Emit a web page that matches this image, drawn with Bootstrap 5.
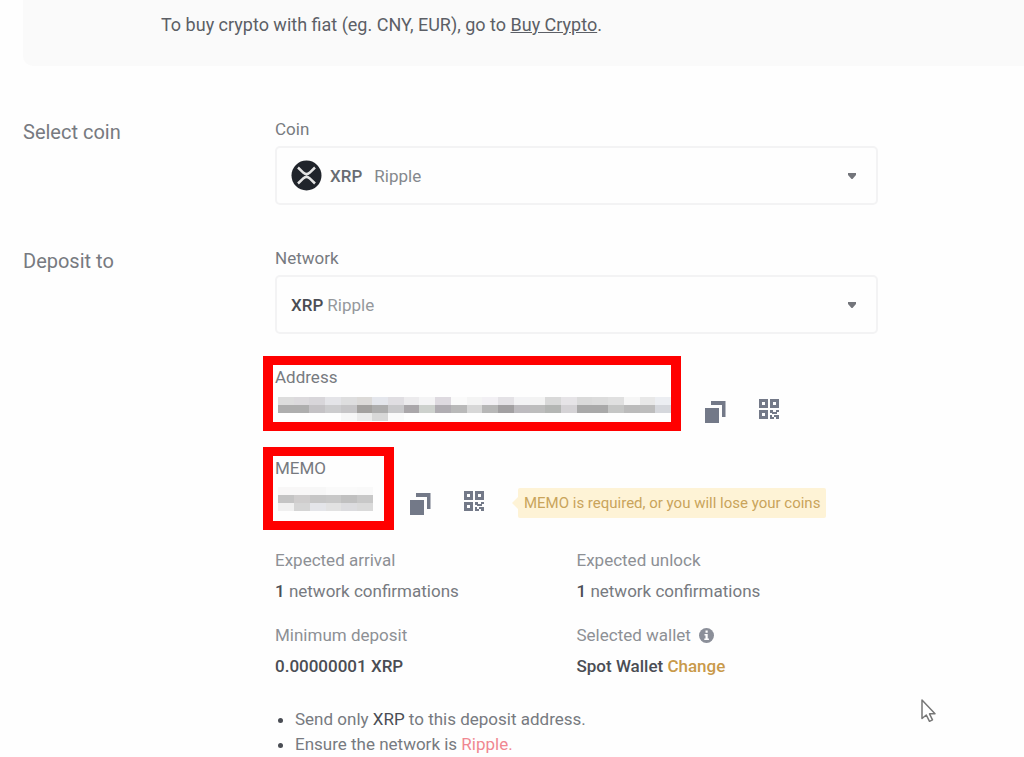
<!DOCTYPE html>
<html lang="en">
<head>
<meta charset="utf-8">
<meta name="viewport" content="width=device-width, initial-scale=1">
<title>Deposit crypto</title>
<link href="https://cdn.jsdelivr.net/npm/bootstrap@5.3.0/dist/css/bootstrap.min.css" rel="stylesheet">
<style>
  body { background: #fefefe; color: #777a80; font-family: Roboto, "Noto Sans", sans-serif; font-size: 17px; line-height: 24px; }
  .page { padding-left: 23px; }
  .notice { background: #fafafa; border-bottom-left-radius: 10px; padding: 13px 24px 29px 138px; color: #5c5f66; font-size: 18px; }
  .notice a { color: inherit; }
  .section-row { display: grid; grid-template-columns: 252px minmax(0, 603px); margin-top: 41px; }
  .notice + .section-row { margin-top: 51px; }
  .section-title { font-size: 20px; line-height: 30px; font-weight: 400; margin: 0; color: #777a80; }
  .field-label { display: block; margin-bottom: 5px; }
  .picker { border: 2px solid #f3f3f4; border-radius: 5px; height: 59px; padding-left: 14px; }
  .picker .form-select { border: 0; background-color: transparent; color: #85888d; font-size: 17px; line-height: 24px; padding: 0 40px 0 0;
    background-image: url("data:image/svg+xml,%3Csvg xmlns='http://www.w3.org/2000/svg' viewBox='0 0 8 6'%3E%3Cpath fill='%2373757b' d='M0 0h8v2L4.500 6h-1L0 2z'/%3E%3C/svg%3E");
    background-size: 8px 6px; background-position: right 20px center; }
  .symbol { font-weight: 500; color: #696c72; }
  .symbol-coin { margin: 0 12px 0 8px; }
  #network { color: #95989c; }
  .ink { color: #4a4d54; }
  .marked { border: solid #f00; border-width: 9px 10px; margin-left: -12px; padding-left: 2px; }
  .marked svg { display: block; height: 24px; margin-left: 3px; }
  .address-box { width: 418px; max-width: 100%; height: 75px; }
  .address-box svg { width: 393px; max-width: calc(100% - 3px); margin-top: 8px; }
  .memo-box { width: 131px; height: 83px; }
  .memo-box svg { width: 95px; margin-top: 7px; }
  .icon-btn { border: 0; background: none; padding: 0; line-height: 0; color: #737988; }
  .tools { gap: 33px; align-items: flex-start; }
  .tools .icon-btn:first-child { padding-top: 2px; }
  .tip { position: relative; background: #fef3d6; color: #c9a45b; font-size: 15px; line-height: 20px; padding: 5px 6px; margin-left: 33px; border-radius: 2px; }
  .tip::before { content: ""; position: absolute; left: -6px; top: 9px; border: solid transparent; border-width: 6px 6px 6px 0; border-right-color: #fef3d6; }
  .facts { row-gap: 20px; margin-top: 18px; }
  .facts dt { font-weight: 400; color: #8d9095; margin-bottom: 7px; }
  .facts dd { margin: 0; }
  .facts b { font-weight: 500; color: #4a4d54; }
  .gold { color: #c99a4a; font-weight: 500; text-decoration: none; }
  .rules { margin: 29px 0 0; padding-left: 20px; }
  .rules li { line-height: 25px; }
  .rules li::marker { color: #4a4d54; }
  .pink { color: #f08791; }
  .pointer { position: absolute; left: 920px; top: 698px; }
</style>
</head>
<body>
<svg class="d-none" aria-hidden="true">
  <symbol id="copy" viewBox="0 0 21 22"><path fill="currentColor" d="M0 7h14v15H0zM6 0h14.500v16H17V4H6z"/></symbol>
  <symbol id="qr" viewBox="0 0 21 21"><path fill="currentColor" fill-rule="evenodd" d="M0 0h9v9H0zM3 3v3h3V3zM11 0h9v9h-9zM14 3v3h3V3zM0 11h9v9H0zM3 14v3h3v-3zM11 11h3v2h2v2h-3v-1h-2zM17 11h3v2h-2v2h-2v-2h1zM11 16h2v2h2v2h-4zM15 16h5v4h-3v-2h-2z"/></symbol>
</svg>
<main class="page">
  <div class="notice">To buy crypto with fiat (eg. CNY, EUR), go to <a href="#">Buy Crypto</a>.</div>

  <section class="section-row">
    <h2 class="section-title">Select coin</h2>
    <div>
      <label class="field-label" for="coin">Coin</label>
      <div class="picker d-flex align-items-center">
        <svg class="flex-shrink-0" width="31" height="31" viewBox="0 0 31 31" aria-hidden="true"><circle cx="15.500" cy="15.500" r="15" fill="#20242b"/><path d="M7 7.500l5.500 5.300q3 2.700 6 0L24 7.500M7 23.500l5.500-5.300q3-2.700 6 0l5.500 5.300" fill="none" stroke="#e4e4e4" stroke-width="2.500"/></svg>
        <span class="symbol symbol-coin">XRP</span>
        <select class="form-select shadow-none" id="coin"><option>Ripple</option></select>
      </div>
    </div>
  </section>

  <section class="section-row">
    <h2 class="section-title">Deposit to</h2>
    <div>
      <label class="field-label" for="network">Network</label>
      <div class="picker d-flex align-items-center">
        <span class="symbol ink me-1">XRP</span>
        <select class="form-select shadow-none" id="network"><option>Ripple</option></select>
      </div>

      <div class="d-flex align-items-end" style="margin-top:22px">
        <div class="marked address-box">
          <div>Address</div>
          <svg viewBox="0 0 25 24" preserveAspectRatio="none" shape-rendering="crispEdges" role="img" aria-label="Hidden address" id="addressMosaic"></svg>
        </div>
        <div class="tools d-flex ms-4 pb-2">
          <button class="icon-btn" type="button" aria-label="Copy address"><svg width="21" height="22"><use href="#copy"/></svg></button>
          <button class="icon-btn" type="button" aria-label="Address QR code"><svg width="21" height="21"><use href="#qr"/></svg></button>
        </div>
      </div>

      <div class="d-flex align-items-end mt-3">
        <div class="marked memo-box">
          <div>MEMO</div>
          <svg viewBox="0 0 6 24" preserveAspectRatio="none" shape-rendering="crispEdges" role="img" aria-label="Hidden memo" id="memoMosaic"></svg>
        </div>
        <div class="d-flex align-items-center ms-3 pb-2 mb-1">
          <div class="tools d-flex">
            <button class="icon-btn" type="button" aria-label="Copy memo"><svg width="21" height="22"><use href="#copy"/></svg></button>
            <button class="icon-btn" type="button" aria-label="Memo QR code"><svg width="21" height="21"><use href="#qr"/></svg></button>
          </div>
          <div class="tip text-nowrap">MEMO is required, or you will lose your coins</div>
        </div>
      </div>

      <dl class="facts row gx-0 mb-0">
        <div class="col-6"><dt>Expected arrival</dt><dd><b>1</b> network confirmations</dd></div>
        <div class="col-6"><dt>Expected unlock</dt><dd><b>1</b> network confirmations</dd></div>
        <div class="col-6"><dt>Minimum deposit</dt><dd><b>0.00000001 XRP</b></dd></div>
        <div class="col-6">
          <dt class="d-flex align-items-center gap-2">Selected wallet
            <svg width="15" height="15" viewBox="0 0 15 15" aria-hidden="true"><circle cx="7.500" cy="7.500" r="7.500" fill="#8b8f99"/><path fill="#fff" d="M6.500 2.500h2.200v2.200H6.500zM5.500 6h3.200v4.500h1.200V12H5.300v-1.500h1.200v-3h-1z"/></svg>
          </dt>
          <dd><b>Spot Wallet</b> <a class="gold" href="#">Change</a></dd>
        </div>
      </dl>

      <ul class="rules">
        <li>Send only <span class="ink">XRP</span> to this deposit address.</li>
        <li>Ensure the network is <span class="pink">Ripple.</span></li>
      </ul>
    </div>
  </section>
</main>
<svg class="pointer" width="18" height="26" viewBox="0 0 18 26" aria-hidden="true"><path d="M2 2v18.500l4.300-3.500 3.200 6.300 3-1.500-3-6H15z" fill="#fff" stroke="#777" stroke-width="1.500" stroke-linejoin="round"/></svg>
<script src="https://cdn.jsdelivr.net/npm/bootstrap@5.3.0/dist/js/bootstrap.bundle.min.js"></script>
<script>
  // Pixelated masks: one colour per cell, three rows of eight units each.
  function mosaic(id, rows) {
    document.getElementById(id).innerHTML = rows.map((row, y) =>
      row.split(' ').map((c, x) => c === '-' ? '' : `<rect x="${x}" y="${y * 8}" width="1" height="8" fill="#${c}"/>`).join('')
    ).join('');
  }
  mosaic('addressMosaic', [
    'dddddd dcdadd d8d6da e4e4e8 dededf dcdad8 e4e6ec e0dee2 ecebed f4f4f5 dedae0 fafafa f4f4f4 f2f0f4 e4e2e6 f3f3f5 f3f3f3 d9d9d9 e6e4e7 dadada dcdcdc e0e0e0 f6f6f6 e8e8e8 eceef2',
    'aeaeae aeaeae c4c2c5 ccccce c6c5c7 a3a19f adadad c8c8ca aaa7aa cdd1cd b0adb2 b9b9b9 d7d7d7 b7b7b7 a2a0a2 bdbbbf bdbdbd b4b6b4 d4d2d5 a9a9a9 a9a9a9 c5c6c5 bbbbbb bdbdbd d5d7dc',
    '- - - - f7f7f7 ebebeb d8d8d8 fafafa'
  ]);
  mosaic('memoMosaic', [
    'f8f7f7 f8f7f7 f7f7f7 fafafa fafafa f9f9f9',
    'c4c4c4 cfcdcd c6c6c6 c8c8c8 c0c0c0 c8c8c8',
    'f0f0f0 d5d5d5 e4e5e9 e2e2e2 dcdcdf dadada'
  ]);
</script>
</body>
</html>
